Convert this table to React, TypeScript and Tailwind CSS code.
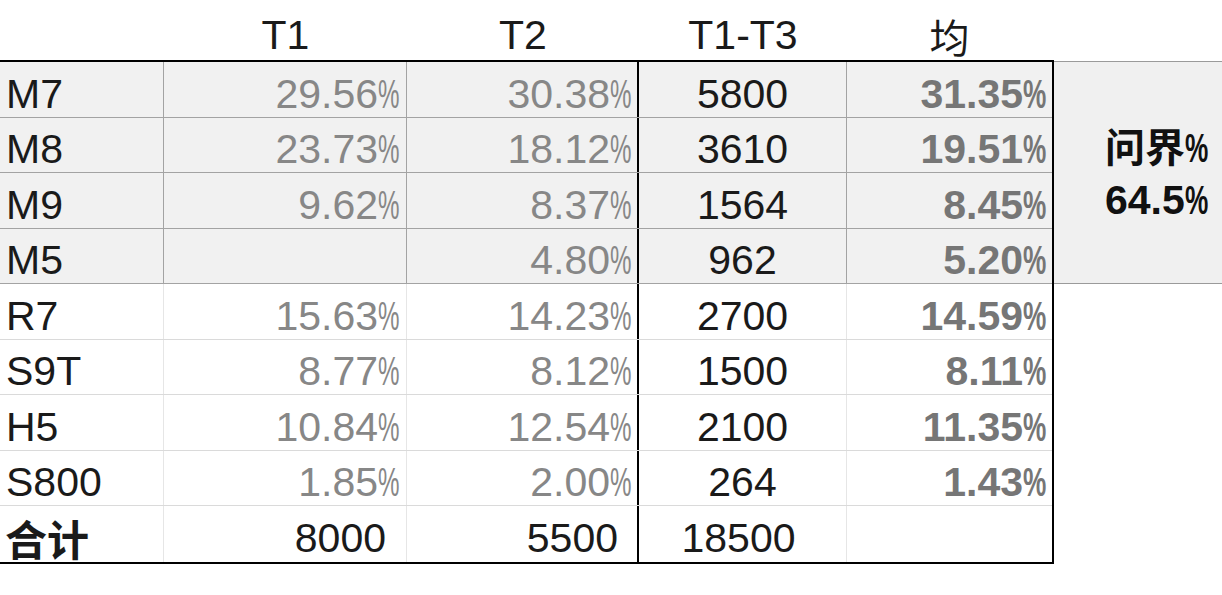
import React from "react";

type Row = {
  name: string;
  t1: string;
  t2: string;
  total: string;
  avg: string;
  shaded: boolean;
};

const rows: Row[] = [
  { name: "M7", t1: "29.56", t2: "30.38", total: "5800", avg: "31.35", shaded: true },
  { name: "M8", t1: "23.73", t2: "18.12", total: "3610", avg: "19.51", shaded: true },
  { name: "M9", t1: "9.62", t2: "8.37", total: "1564", avg: "8.45", shaded: true },
  { name: "M5", t1: "", t2: "4.80", total: "962", avg: "5.20", shaded: true },
  { name: "R7", t1: "15.63", t2: "14.23", total: "2700", avg: "14.59", shaded: false },
  { name: "S9T", t1: "8.77", t2: "8.12", total: "1500", avg: "8.11", shaded: false },
  { name: "H5", t1: "10.84", t2: "12.54", total: "2100", avg: "11.35", shaded: false },
  { name: "S800", t1: "1.85", t2: "2.00", total: "264", avg: "1.43", shaded: false },
];

// narrow percent sign, like the spreadsheet font
function Pct({ v, bold }: { v: string; bold?: boolean }) {
  if (!v) return null;
  return (
    <>
      {v}
      {bold ? (
        <span className="inline-block w-[23px] text-left">
          <span className="inline-block origin-left scale-x-[0.64]">%</span>
        </span>
      ) : (
        <span className="inline-block w-[21px] text-left">
          <span className="inline-block origin-left scale-x-[0.59]">%</span>
        </span>
      )}
    </>
  );
}

export default function App() {
  return (
    <div className="w-[1222px] h-[595px] bg-white overflow-hidden font-['Liberation_Sans','Noto_Sans_CJK_SC',sans-serif] text-[41px] leading-[41px] text-[#1a1a1a]">
      <div className="flex">
        {/* table */}
        <div className="w-[1054px] shrink-0">
          {/* header */}
          <div className="h-[60px] grid grid-cols-[164px_243px_232px_208px_205px] items-end pb-[4px]">
            <div />
            <div className="text-center">T1</div>
            <div className="text-center">T2</div>
            <div className="text-center">T1-T3</div>
            <div className="text-center font-['Noto_Sans_CJK_SC',sans-serif] text-[40px] leading-[41px] relative top-[1px]">均</div>
          </div>

          {/* body */}
          <div className="border-t-2 border-b-2 border-r-2 border-black">
            {rows.map((r) => (
              <div
                key={r.name}
                className={`h-[55.5px] grid grid-cols-[164px_243px_232px_208px_205px] border-b ${
                  r.shaded ? "bg-[#f1f1f1] border-[#a3a3a3]" : "bg-white border-[#dadada]"
                }`}
              >
                <div className={`flex items-center pt-[10px] pl-[6px] border-r ${r.shaded ? "border-[#a3a3a3]" : "border-[#e6e6e6]"}`}>
                  {r.name}
                </div>
                <div className={`flex items-center justify-end pt-[10px] pr-[7px] text-[#878787] border-r ${r.shaded ? "border-[#a3a3a3]" : "border-[#e6e6e6]"}`}>
                  <Pct v={r.t1} />
                </div>
                <div className="flex items-center justify-end pt-[10px] pr-[6px] text-[#878787] border-r-2 border-black">
                  <Pct v={r.t2} />
                </div>
                <div className={`flex items-center justify-center pt-[10px] border-r ${r.shaded ? "border-[#a3a3a3]" : "border-[#e6e6e6]"}`}>
                  {r.total}
                </div>
                <div className="flex items-center justify-end pt-[10px] pr-[6px] font-bold text-[#767676]">
                  <Pct v={r.avg} bold />
                </div>
              </div>
            ))}

            {/* 合计 */}
            <div className="h-[55.5px] grid grid-cols-[164px_243px_232px_208px_205px] bg-white">
              <div className="flex items-center pt-[8px] pl-[5px] border-r border-[#e6e6e6] font-bold font-['Noto_Sans_CJK_SC',sans-serif] text-[42px]">
                合计
              </div>
              <div className="flex items-center justify-end pt-[10px] pr-[20px] border-r border-[#e6e6e6]">8000</div>
              <div className="flex items-center justify-end pt-[10px] pr-[19px] border-r-2 border-black">5500</div>
              <div className="flex items-center justify-center pt-[10px] pr-[8px] border-r border-[#e6e6e6]">18500</div>
              <div />
            </div>
          </div>
        </div>

        {/* side note */}
        <div className="flex-1 pt-[61px]">
          <div className="h-[223px] bg-[#f0f0f0] border-y border-[#9a9a9a] flex flex-col justify-center pl-[51px] font-bold leading-[52px] text-[#111]">
            <div className="font-['Noto_Sans_CJK_SC',sans-serif] text-[40px]">
              问界
              <span className="inline-block w-[23px] text-left font-['Liberation_Sans',sans-serif] text-[41px]">
                <span className="inline-block origin-left scale-x-[0.64]">%</span>
              </span>
            </div>
            <div>
              <Pct v="64.5" bold />
            </div>
          </div>
        </div>
      </div>
    </div>
  );
}
